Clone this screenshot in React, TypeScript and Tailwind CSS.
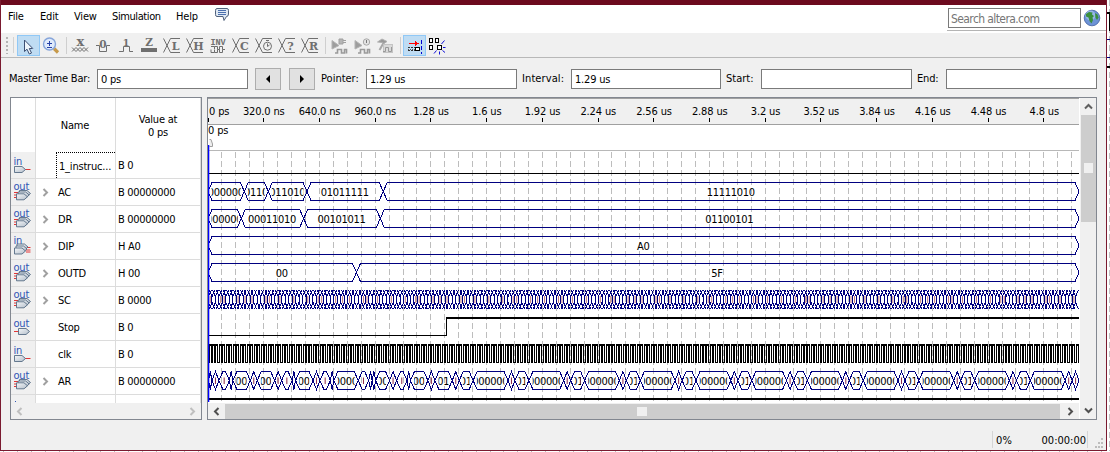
import React from "react";

const INK = "#6f6f6f";
const NAVY = "#000080";
const FONT = "'DejaVu Sans Condensed','DejaVu Sans',sans-serif";

/* ---------- toolbar icons (23 x 21 cells) ---------- */

function Cell({ children, active }: { children: React.ReactNode; active?: boolean }) {
  return (
    <div
      className={
        active
          ? "h-[21px] w-[23px] border border-[#90c8f6] bg-[#bfdcf3]"
          : "h-[21px] w-[23px] border border-transparent"
      }
    >
      <svg width="23" height="21" viewBox="0 0 23 21" className="-mt-px -ml-px block overflow-visible" fill="none" stroke={INK}>
        {children}
      </svg>
    </div>
  );
}

function Glyph({ x, y, s = 11, children }: { x: number; y: number; s?: number; children: string }) {
  return (
    <text
      x={x}
      y={y}
      fontSize={s}
      fontWeight="bold"
      textAnchor="middle"
      fill={INK}
      stroke="none"
      letterSpacing="0"
      fontFamily="'DejaVu Serif',serif"
    >
      {children}
    </text>
  );
}

function BusIcon({ letter, children }: { letter?: string; children?: React.ReactNode }) {
  return (
    <Cell>
      <path d="M2.5 3.5L9.5 17.5H19M2.5 17.5L9.5 3.5H19" />
      {letter && (
        <Glyph x={14.5} y={14.5} s={11}>
          {letter}
        </Glyph>
      )}
      {children}
    </Cell>
  );
}

function Sep() {
  return (
    <div className="flex w-[6px] justify-center">
      <div className="h-[17px] w-px bg-[#cfcfcf]" />
    </div>
  );
}

function Toolbar() {
  return (
    <div className="flex h-[25px] items-center border-b border-[#b8b8b8] bg-[#f0f0f0] pl-[5px]">
      <svg width="3" height="18" className="mr-[4px]" shapeRendering="crispEdges">
        <path d="M1 1V18" stroke="#b4b4b4" strokeWidth="2" strokeDasharray="2 2" />
      </svg>
      <div className="mr-[3px] h-[16px] w-px bg-[#d2d2d2]" />
      <Cell active>
        <path d="M7.5 5V16.5L10 14.2L12.3 19L14.5 18L12.3 13.5H15.7Z" fill="#eef5fb" stroke="#3c4f73" />
        <path d="M8 5L16 13.5" stroke="#8ba0bd" />
      </Cell>
      <Cell>
        <path d="M14 13.5L18 17.5" stroke="#c79a4b" strokeWidth="3.2" />
        <circle cx="9.5" cy="9" r="6" fill="#dfeafb" stroke="#86a5da" strokeWidth="1.4" />
        <path d="M7 8.5H12M9.5 6V11M7 12.5H12" stroke="#2742a8" />
      </Cell>
      <Sep />
      <Cell>
        <Glyph x={11.5} y={11.2} s={13}>x</Glyph>
        <path d="M3 12.5L7 16.5L11 12.5L15 16.5L19 12.5M3 16.5L7 12.5L11 16.5L15 12.5L19 16.5" />
      </Cell>
      <Cell>
        <path d="M4 10.5H7.5V16.5H14.5V10.5H18" />
        <Glyph x={11} y={12.6} s={10.5}>0</Glyph>
      </Cell>
      <Cell>
        <path d="M4 16.5H8.5V11.5H14.5V16.5H18" />
        <Glyph x={11} y={10.5} s={9.5}>1</Glyph>
      </Cell>
      <Cell>
        <path d="M3 15H19" strokeWidth="4" />
        <Glyph x={11} y={11.3} s={10.5}>Z</Glyph>
      </Cell>
      <BusIcon letter="L" />
      <BusIcon letter="H" />
      <Cell>
        <text x="3.5" y="9.5" fontSize="8.5" textLength="15" fontWeight="bold" fill={INK} stroke="none" fontFamily="'Liberation Mono',monospace">
          INV
        </text>
        <path d="M4 11.5H7.5V14.5M7.5 11.5H10.5V14.5H12.5V11.5H15.5V14.5H18M4 14.5V17.5H7.5V15M7.5 17.5H10.5V14.5M12.5 14.5V17.5H15.5V14.5" />
      </Cell>
      <BusIcon letter="C" />
      <BusIcon>
        <circle cx="14.5" cy="11.2" r="4" fill="#f0f0f0" />
        <path d="M14.5 11.5V8.5M14.5 11.5L16.5 10M13 5.5H16" />
      </BusIcon>
      <BusIcon letter="?" />
      <BusIcon letter="R" />
      <Sep />
      <Cell>
        <path d="M4 5.5L11 10.5L4 14Z" fill="#9d9d9d" stroke="#b3b3b3" />
        <path d="M11 4H15V9H11ZM15 5.5H18M15 7.5H18" fill="#b5b5b5" stroke="#a0a0a0" />
        <path d="M7 18H9.5V14.5H13.5V18H16.5V14.5H18.5V18.5" strokeWidth="1.6" stroke="#9a9a9a" />
      </Cell>
      <Cell>
        <path d="M4 5.5L11 10.5L4 14Z" fill="#9d9d9d" stroke="#b3b3b3" />
        <circle cx="15.5" cy="7" r="3.2" fill="#e2e2e2" stroke="#a8a8a8" />
        <path d="M15.5 5V8" stroke="#777" />
        <path d="M7 18H9.5V14.5H13.5V18H16.5V14.5H18.5V18.5" strokeWidth="1.6" stroke="#9a9a9a" />
      </Cell>
      <Cell>
        <path d="M3.5 7L8 4L13 6.5L10 8.5L8 7.5Z" fill="#999" stroke="#b0b0b0" />
        <path d="M9.5 8L5.5 15" stroke="#a8a8a8" strokeWidth="2" />
        <rect x="9.5" y="9.5" width="9" height="8" fill="#d9d9d9" stroke="#c4c4c4" />
        <path d="M9 16.5H11.5V12.5H14.5V16.5H17.5V12" stroke="#999" />
      </Cell>
      <Sep />
      <Cell active>
        <g shapeRendering="crispEdges">
          <path d="M6 8.5H13" stroke="#ff0000" />
          <path d="M12 6V11L16 8.5Z" fill="#ff0000" stroke="none" />
          <path d="M4.5 12.5H12M4.5 15.5H12" stroke="#333" strokeDasharray="2 1" />
          <path d="M5 14H12" stroke="#555" strokeDasharray="1 1" />
          <rect x="12.5" y="12.5" width="4" height="3" stroke="#000" fill="#fff" />
          <path d="M18.5 5V19" stroke="#0000d0" strokeDasharray="4 2" />
        </g>
      </Cell>
      <Cell>
        <g stroke="#000" shapeRendering="crispEdges">
          <rect x="3.5" y="3.5" width="3" height="4" fill="#fff" />
          <rect x="9.5" y="3.5" width="3" height="4" fill="#fff" />
          <rect x="3.5" y="10.5" width="3" height="4" fill="#fff" />
          <rect x="11.5" y="10.5" width="4" height="4" fill="#fff" />
        </g>
        <path d="M15.5 9L18.5 5.5M17 12.5H19.5M16.5 15.5L19 17.5M13.5 16.5V19.5M10.5 15.5L8 18.5" stroke="#1010d8" />
      </Cell>
    </div>
  );
}

/* ---------- form row ---------- */

function Field({ className, value }: { className: string; value?: string }) {
  return (
    <div className={"h-[20px] border border-[#7a7a7a] bg-white pl-[3px] leading-[20px] " + className}>{value}</div>
  );
}

function Arrow({ left }: { left?: boolean }) {
  return (
    <div className="flex h-[22px] w-[26px] items-center justify-center border border-[#adadad] bg-[#e1e1e1]">
      <svg width="6" height="8">
        <path d={left ? "M5 0V8L1 4Z" : "M1 0V8L5 4Z"} fill="#000" />
      </svg>
    </div>
  );
}

/* ---------- signal table ---------- */

type Sig = { name: string; value: string; io: "in" | "out"; bus?: boolean };
const SIGNALS: Sig[] = [
  { name: "1_instruc...", value: "B 0", io: "in" },
  { name: "AC", value: "B 00000000", io: "out", bus: true },
  { name: "DR", value: "B 00000000", io: "out", bus: true },
  { name: "DIP", value: "H A0", io: "in", bus: true },
  { name: "OUTD", value: "H 00", io: "out", bus: true },
  { name: "SC", value: "B 0000", io: "out", bus: true },
  { name: "Stop", value: "B 0", io: "out" },
  { name: "clk", value: "B 0", io: "in" },
  { name: "AR", value: "B 00000000", io: "out", bus: true },
];

function PinIcon({ io, bus }: { io: "in" | "out"; bus?: boolean }) {
  const pin = "M0 0H7.5L11 3L7.5 6H0Z";
  return (
    <svg width="24" height="26" viewBox="0 0 24 26" fill="url(#pin)" stroke="#566c84" strokeWidth="0.9">
      <defs>
        <linearGradient id="pin" x1="0" y1="0" x2="1" y2="1">
          <stop offset="0" stopColor="#f4f6f8" />
          <stop offset="1" stopColor="#b4bfcb" />
        </linearGradient>
      </defs>
      <text x="2.5" y={bus ? 10.6 : 12.7} fontSize="11" fill="#2f55b5" stroke="none" letterSpacing="-0.2" fontFamily={FONT}>
        {io}
      </text>
      {bus ? (
        <g>
          {io === "out" && <path d="M3 13.5H7M3 16H7M3 18.5H6" stroke="#e02020" />}
          {io === "in" && <path d="M14 14.5H19.5M15 17H19.5M15 19H19.5" stroke="#e02020" />}
          <path d={pin} transform={io === "out" ? "translate(8.5 11.5)" : "translate(6 11)"} />
          <path d={pin} transform={io === "out" ? "translate(7.2 13)" : "translate(5 13)"} />
          <path d={pin} transform={io === "out" ? "translate(5.5 14.8)" : "translate(3.5 15)"} />
        </g>
      ) : io === "in" ? (
        <g>
          <path d="M13 17.5H19.5" stroke="#e02020" />
          <path d={pin} transform="translate(3.5 14.5)" />
        </g>
      ) : (
        <g>
          <path d="M3 17.5H8" stroke="#e02020" />
          <path d={pin} transform="translate(7.5 14.5)" />
        </g>
      )}
    </svg>
  );
}

function Chevron({ d, color }: { d: string; color: string }) {
  return (
    <svg width="9" height="9" viewBox="0 0 9 9" fill="none" stroke={color} strokeWidth="2">
      <path d={d} />
    </svg>
  );
}
const L = "M6.5 1L3 4.5L6.5 8";
const R = "M2.5 1L6 4.5L2.5 8";

function SignalTable() {
  return (
    <div className="flex h-[323px] w-[192px] flex-col border border-[#828790] bg-white">
      <div className="flex h-[54px] shrink-0">
        <div className="w-[25px] border-r border-[#dcdcdc]" />
        <div className="flex w-[80px] items-center justify-center border-r border-[#dcdcdc] pt-[2px] pr-px">Name</div>
        <div className="flex w-[85px] flex-col items-center justify-center border-r border-[#dcdcdc] pt-[2px] text-center leading-[13px]">
          <span>Value at</span>
          <span>0 ps</span>
        </div>
      </div>
      <div className="flex h-[251px] shrink-0 flex-col">
        {SIGNALS.map((s, i) => (
          <div key={i} className="flex h-[27px] shrink-0 border-b border-[#dcdcdc]">
            <div className="w-[25px] shrink-0 border-r border-[#dcdcdc] bg-[#f0f0f0]">
              <PinIcon io={s.io} bus={s.bus} />
            </div>
            <div className="flex w-[80px] shrink-0 items-center border-r border-[#dcdcdc]">
              <div className="flex w-[20px] shrink-0 justify-center pr-px">{s.bus && <Chevron d={R} color="#a0a0a0" />}</div>
              <div
                className={
                  i === 0
                    ? "flex h-full w-[59px] items-center border-t border-l border-dotted border-black pt-[3px] pl-[2px] tracking-[-0.2px] whitespace-nowrap"
                    : "pt-[3px] pl-[2px]"
                }
              >
                {s.name}
              </div>
            </div>
            <div className="flex w-[85px] shrink-0 items-center border-r border-[#dcdcdc] pt-[3px] pl-[2px] tracking-[-0.3px]">
              {s.value}
            </div>
          </div>
        ))}
        <div className="flex flex-1">
          <div className="flex w-[25px] border-r border-[#dcdcdc] bg-[#f0f0f0] pt-[6px] pl-[4px]">
            <div className="h-px w-px bg-[#2f55b5]" />
          </div>
          <div className="w-[80px] border-r border-[#dcdcdc]" />
          <div className="w-[85px] border-r border-[#dcdcdc]" />
        </div>
      </div>
      <div className="flex h-[16px] items-center justify-between bg-[#f0f0f0] px-[4px]">
        <Chevron d={L} color="#bfbfbf" />
        <Chevron d={R} color="#bfbfbf" />
      </div>
    </div>
  );
}

/* ---------- waveform chart: 871 x 304, origin at window (208, 98) ---------- */

const W = 871;
const CLK = 3.4825;
const RULER = ["320.0 ns", "640.0 ns", "960.0 ns", "1.28 us", "1.6 us", "1.92 us", "2.24 us", "2.56 us", "2.88 us", "3.2 us", "3.52 us", "3.84 us", "4.16 us", "4.48 us", "4.8 us"];

type Seg = { x: number; label: string };

/* Labels wider than their segment keep only the middle characters. */
function fit(label: string, width: number) {
  let s = label;
  while (s.length > 2 && (s.length - 2) * 6 >= width) s = s.slice(1, -1);
  return width < 4 ? "" : s;
}

function Bus({ id, top, segs, margin = 3.5 }: { id: string; top: number; segs: Seg[]; margin?: number }) {
  const t = top + 0.5;
  const b = top + 18.5;
  const c = top + 9.5;
  const items = segs.map((s, i) => {
    const e = i + 1 < segs.length ? segs[i + 1].x : W;
    const a = Math.min(4, (e - s.x) / 2);
    const d = `M${s.x} ${c}L${s.x + a} ${t}H${e - a}L${e} ${c}L${e - a} ${b}H${s.x + a}Z`;
    const w = e - s.x - 2 * margin;
    return { x: s.x, e, d, w, text: fit(s.label, w) };
  });
  return (
    <g>
      {items.map((s, i) =>
        s.text ? (
          <g key={i}>
            <clipPath id={`${id}${i}`}>
              <rect x={s.x + margin} y={top} width={s.w} height="19" />
            </clipPath>
            <text x={(s.x + s.e) / 2 - s.text.length * 3 - 0.4} y={top + 14.4} clipPath={`url(#${id}${i})`} letterSpacing="-0.3">
              {s.text}
            </text>
          </g>
        ) : (
          s.e - s.x > 5 && <path key={i} d={`M${(s.x + s.e) / 2} ${top + 6.5}V${top + 13}`} stroke="#8a2a4a" strokeWidth="1" />
        ),
      )}
      <path d={items.map((s) => s.d).join("")} fill="none" stroke={NAVY} shapeRendering="crispEdges" />
    </g>
  );
}

const arTicks = [0, 1, 3, 6, 7, 12, 14, 19, 21, 24, 25, 30, 32, 35, 36, 43, 46, 47, 48, 52, 54, 57, 58, 63, 65, 70];
for (let k = 72; k < 250; k += 16) arTicks.push(k, k + 4, k + 14);
const AR: Seg[] = arTicks
  .filter((k) => k * CLK < W - 2)
  .map((k) => ({ x: 0.5 + k * CLK, label: (k >= 72 && k % 16 === 8) || k === 65 ? "00001000" : "00000000" }));
const EDGES: number[] = Array.from({ length: 250 }, (_, i) => 0.5 + i * CLK);
const GRID = Array.from({ length: 62 }, (_, i) => Math.floor((i + 1) * 13.93) + 0.5);

function Waves() {
  const clkHigh = EDGES.map((x) => `M${Math.round(x)} 247h3`).join("");
  const clk = EDGES.map((x) => {
    const a = Math.round(x) + 0.5;
    return `M${a} 246V265M${a + 2} 246V265M${a + 2} 264.5H${Math.round(x + CLK) + 1}`;
  }).join("");
  return (
    <svg width={W} height="304" viewBox={`0 0 ${W} 304`} className="block bg-white" fontFamily={FONT} fontSize="11" fill="#000">
      <g shapeRendering="crispEdges">
        <rect width={W} height="26" fill="#f0f0f0" />
        <path d={`M0 0.5H${W}M0 26.5H${W}`} stroke="#a0a0a0" />
        <path d={`M0 52.5H${W}`} stroke="#b8b8b8" />
        {GRID.map((x) => (
          <path key={x} d={`M${x} 54V304`} stroke="#bdbdbd" strokeDasharray="6 3" />
        ))}
        {RULER.map((_, i) => (
          <path key={i} d={`M${Math.floor((i + 1) * 55.72) + 0.5} 20V24`} stroke="#000" />
        ))}
        <path d="M0.5 20V24" stroke="#000" />
      </g>
      <text x="1" y="17" letterSpacing="-0.15">0 ps</text>
      <text x="0" y="36" letterSpacing="-0.15">0 ps</text>
      {RULER.map((r, i) => (
        <text key={r} x={(i + 1) * 55.75} y="17" textAnchor="middle" letterSpacing="-0.15">
          {r}
        </text>
      ))}
      <path d={`M0 75.5H${W}`} stroke="#000" shapeRendering="crispEdges" />
      <Bus id="ac" top={84} segs={[{ x: 0, label: "00000000" }, { x: 36.3, label: "00011010" }, { x: 60.3, label: "00110100" }, { x: 99, label: "01011111" }, { x: 175.2, label: "11111010" }]} />
      <Bus id="dr" top={111} segs={[{ x: 0, label: "00000000" }, { x: 33.3, label: "00011010" }, { x: 95.7, label: "00101011" }, { x: 172.3, label: "01100101" }]} />
      <Bus id="dip" top={138} segs={[{ x: 0, label: "A0" }]} />
      <Bus id="outd" top={165} segs={[{ x: 0, label: "00" }, { x: 148.5, label: "5F" }]} />
      {EDGES.filter((_, i) => i % 4 === 0 || i % 7 === 3).map((x) => (
        <path key={x} d={`M${x + 1.75} 198V205`} stroke="#a8403c" strokeOpacity="0.7" strokeWidth="1" />
      ))}
      <path
        d={EDGES.map((x) => `M${x - 2.8} 192L${x} 198.5V204.5L${x + 2.8} 211M${x + 2.8} 192L${x} 198.5M${x} 204.5L${x - 2.8} 211`).join("")}
        stroke={NAVY}
        fill="none"
        shapeRendering="crispEdges"
      />
      <g fill="none" stroke="#000" shapeRendering="crispEdges">
        <path d="M0 237.5H238.5V219" />
        <path d={`M238 220H${W}`} strokeWidth="2" />
        <path d={clk} />
        <path d={clkHigh} strokeWidth="2" />
        <path d={`M0 301H${W}`} strokeWidth="2" />
      </g>
      <Bus id="ar" top={273} segs={AR} margin={3.6} />
      <path d="M1.5 48.5H4.5V46L3 41.5H1.5" fill="#eee" stroke="#a0a0a0" />
      <path d="M0.5 47V304" stroke="#0000ff" strokeWidth="1.6" />
    </svg>
  );
}

function WavePanel() {
  return (
    <div className="flex h-[323px] w-[890px] border border-[#828790] bg-[#f0f0f0]">
      <div className="flex w-[871px] flex-col">
        <Waves />
        <div className="flex h-[17px] items-center border-t border-white">
          <div className="flex w-[17px] justify-center">
            <Chevron d={L} color="#505050" />
          </div>
          <div className="flex h-[15px] w-[835px] items-center bg-[#cdcdcd] pl-[412px]">
            <div className="h-[9px] w-[10px] bg-[#f0f0f0]" />
          </div>
          <div className="flex w-[19px] justify-center pl-px">
            <Chevron d={R} color="#505050" />
          </div>
        </div>
      </div>
      <div className="flex w-[17px] flex-col items-center border-l border-white">
        <div className="flex h-[17px] items-center">
          <Chevron d="M1 6.5L4.5 3L8 6.5" color="#606060" />
        </div>
        <div className="flex h-[107px] w-[15px] items-center justify-center bg-[#cdcdcd]">
          <div className="mb-[2px] h-[10px] w-[9px] bg-[#f0f0f0]" />
        </div>
        <div className="flex-1" />
        <div className="flex h-[17px] items-center">
          <Chevron d="M1 2.5L4.5 6L8 2.5" color="#505050" />
        </div>
      </div>
    </div>
  );
}

/* ---------- window ---------- */

export default function App() {
  return (
    <div className="flex h-[452px] w-[1110px] flex-col overflow-hidden bg-white font-['DejaVu_Sans_Condensed','DejaVu_Sans',sans-serif] text-[11px] tracking-[-0.2px] text-black">
      <div className="flex h-[451px]">
        <div className="flex w-[1107px] flex-col border-x border-b border-[#7a1a30] bg-[#f0f0f0]">
          <div className="h-[5px] shrink-0 bg-[#6c0a1e]" />
          <div className="flex h-[28px] shrink-0 items-start bg-white pl-[7px]">
            <span className="mt-[4px] w-[32px] leading-[16px]">File</span>
            <span className="mt-[4px] w-[34px] leading-[16px]">Edit</span>
            <span className="mt-[4px] w-[38px] leading-[16px]">View</span>
            <span className="mt-[4px] w-[64px] leading-[16px] tracking-[-0.4px]">Simulation</span>
            <span className="mt-[4px] w-[38px] leading-[16px]">Help</span>
            <svg width="16" height="16" viewBox="0 0 16 16" className="mt-[2px]">
              <path d="M3 1.5H13Q14.5 1.5 14.5 3.5V7Q14.5 9.5 12.5 9.5L10 13.5L9 9.5H3Q1.5 9.5 1.5 7.5V3.5Q1.5 1.5 3 1.5Z" fill="#dfe8f3" stroke="#50617c" />
              <path d="M4 3.5H12M4 5.5H12M4 7.5H12" stroke="#4a6fae" />
            </svg>
            <div className="ml-auto flex h-[26px] w-[159px] items-center border-b border-[#b4b4b4] pl-[1px]">
              <div className="h-[20px] w-[133px] border border-[#7a7a7a] pl-[2px] text-[12px] leading-[20px] tracking-[-0.6px] text-[#767676]">
                Search altera.com
              </div>
              <svg width="18" height="18" viewBox="0 0 18 18" className="ml-[2px]">
                <circle cx="9" cy="9" r="7.8" fill="#6d93d6" stroke="#3f5f9f" strokeWidth="0.8" />
                <circle cx="7.5" cy="6.5" r="5" fill="#a9c5f0" opacity="0.7" />
                <path d="M3 5L6 3L9.5 3.5L9 5.5L11 7L9.5 8.5L10 11L8.5 14.5L6.5 12L5.5 8.5L3 7.5Z" fill="#3a8f3c" />
                <path d="M12 4L14.5 5.5L15.5 8.5L14 11L12.5 8.5Z" fill="#3a8f3c" />
              </svg>
            </div>
          </div>
          <Toolbar />
          <div className="flex h-[39px] shrink-0 items-center pt-[3px] pl-[8px]">
            <span className="w-[88px] pt-px tracking-[-0.2px]">Master Time Bar:</span>
            <Field className="w-[151px]" value="0 ps" />
            <div className="ml-[7px] flex gap-[8px]">
              <Arrow left />
              <Arrow />
            </div>
            <span className="ml-[6px] w-[45px] pt-px tracking-[0px]">Pointer:</span>
            <Field className="w-[151px]" value="1.29 us" />
            <span className="ml-[5px] w-[49px] pt-px tracking-[0.1px]">Interval:</span>
            <Field className="w-[150px]" value="1.29 us" />
            <span className="ml-[5px] w-[35px] pt-px tracking-[0px]">Start:</span>
            <Field className="w-[151px]" />
            <span className="ml-[5px] w-[29px] pt-px">End:</span>
            <Field className="w-[151px]" />
          </div>
          <div className="flex shrink-0 gap-[5px] pl-[9px]">
            <SignalTable />
            <WavePanel />
          </div>
          <div className="flex flex-1 items-end justify-end pb-[2px]">
            <div className="flex h-[17px] w-[96px] items-center justify-between border-x border-[#d5d5d5] pt-[3px] pr-px pl-[3px]">
              <span className="tracking-[0.3px]">0%</span>
              <span className="tracking-[0px]">00:00:00</span>
            </div>
            <svg width="18" height="12" fill="#bdbdbd" shapeRendering="crispEdges">
              <path d="M13 2h2v2h-2zM13 6h2v2h-2zM13 10h2v2h-2zM10 6h2v2h-2zM10 10h2v2h-2zM7 10h2v2h-2z" />
            </svg>
          </div>
        </div>
        <svg width="3" height="451" shapeRendering="crispEdges">
          <path d="M2.5 0V451" stroke="#c3c3c3" strokeDasharray="6 3" />
          <path d="M0 39.5H3M0 57.5H3" stroke={NAVY} />
          <path d="M0 13H3M0 67H3" stroke="#000" strokeWidth="2" />
          <path d="M2.5 13V31" stroke="#000" />
        </svg>
      </div>
      <svg width="1110" height="1" shapeRendering="crispEdges">
        <path d="M3 0.5H1110" stroke="#bdbdbd" strokeDasharray="1 12.9" />
      </svg>
    </div>
  );
}
